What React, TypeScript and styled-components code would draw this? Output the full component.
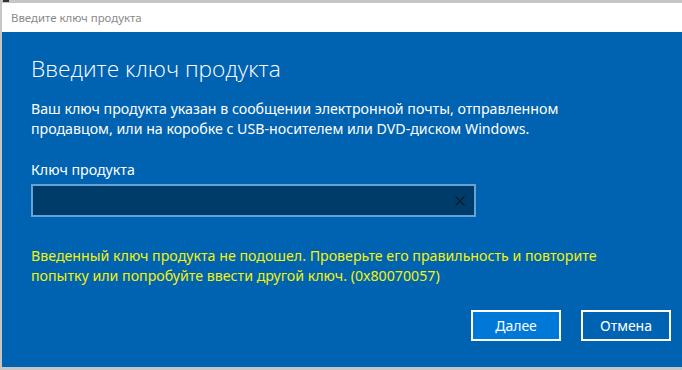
import React from "react";
import styled, { createGlobalStyle } from "styled-components";

const Global = createGlobalStyle`
  html, body { margin: 0; padding: 0; background: #c9c9c9; }
  body { font-family: "Noto Sans", "Open Sans", sans-serif; }
`;

const Frame = styled.div`
  width: 682px;
  height: 370px;
  box-sizing: border-box;
  padding: 3px 0 3px 2px;
  background: #c6c6c6;
  display: flex;
  flex-direction: column;
  position: relative;
  overflow: hidden;
`;

const TopMark = styled.div`
  position: absolute;
  left: 3px;
  top: 0;
  width: 6px;
  height: 2px;
  background: #333;
`;

const TitleBar = styled.div`
  height: 29px;
  background: #ffffff;
  display: flex;
  align-items: center;
  padding-left: 9px;
  font-size: 11.4px;
  color: #8a8a8a;
  flex: none;
`;

const Body = styled.div`
  flex: 1;
  background: #0063b1;
  padding: 22px 11px 0 29px;
  display: flex;
  flex-direction: column;
  color: #ffffff;
`;

const Heading = styled.h1`
  margin: 0;
  font-family: "Open Sans", "Noto Sans", sans-serif;
  font-weight: 300;
  font-size: 22.7px;
  line-height: 30px;
  color: #ffffff;
`;

const Text = styled.p<{ $color?: string; $top: number }>`
  margin: ${(p) => p.$top}px 0 0 0;
  font-size: 14.2px;
  line-height: 20px;
  color: ${(p) => p.$color || "#ffffff"};
`;

const Field = styled.div`
  margin-top: 4px;
  width: 445px;
  height: 33px;
  box-sizing: border-box;
  border: 2px solid #66a2d6;
  background: #003c6a;
  display: flex;
  align-items: center;
  justify-content: flex-end;
  padding-right: 9px;
`;

const Buttons = styled.div`
  margin-top: 24px;
  display: flex;
  justify-content: flex-end;
  gap: 20px;
`;

const Button = styled.button<{ $primary?: boolean }>`
  width: 90px;
  height: 31px;
  box-sizing: border-box;
  border: 2px solid #ffffff;
  background: ${(p) => (p.$primary ? "#0078d7" : "#0063b1")};
  color: #ffffff;
  font-family: "Noto Sans", sans-serif;
  font-size: 14px;
  padding: 0;
  display: flex;
  align-items: center;
  justify-content: center;
`;

const ClearIcon = () => (
  <svg width="10" height="10" viewBox="0 0 10 10">
    <path d="M0.5 0.5 L9.5 9.5 M9.5 0.5 L0.5 9.5" stroke="#0b1a26" strokeWidth="1.1" fill="none" />
  </svg>
);

export default function App() {
  return (
    <>
      <Global />
      <Frame>
        <TopMark />
        <TitleBar>Введите ключ продукта</TitleBar>
        <Body>
          <Heading>Введите ключ продукта</Heading>
          <Text $top={15}>
            Ваш ключ продукта указан в сообщении электронной почты, отправленном
            <br />
            продавцом, или на коробке с USB-носителем или DVD-диском Windows.
          </Text>
          <Text $top={21}>Ключ продукта</Text>
          <Field>
            <ClearIcon />
          </Field>
          <Text $top={29} $color="#f2f20a">
            Введенный ключ продукта не подошел. Проверьте его правильность и повторите
            <br />
            попытку или попробуйте ввести другой ключ. (0x80070057)
          </Text>
          <Buttons>
            <Button $primary>Далее</Button>
            <Button>Отмена</Button>
          </Buttons>
        </Body>
      </Frame>
    </>
  );
}
